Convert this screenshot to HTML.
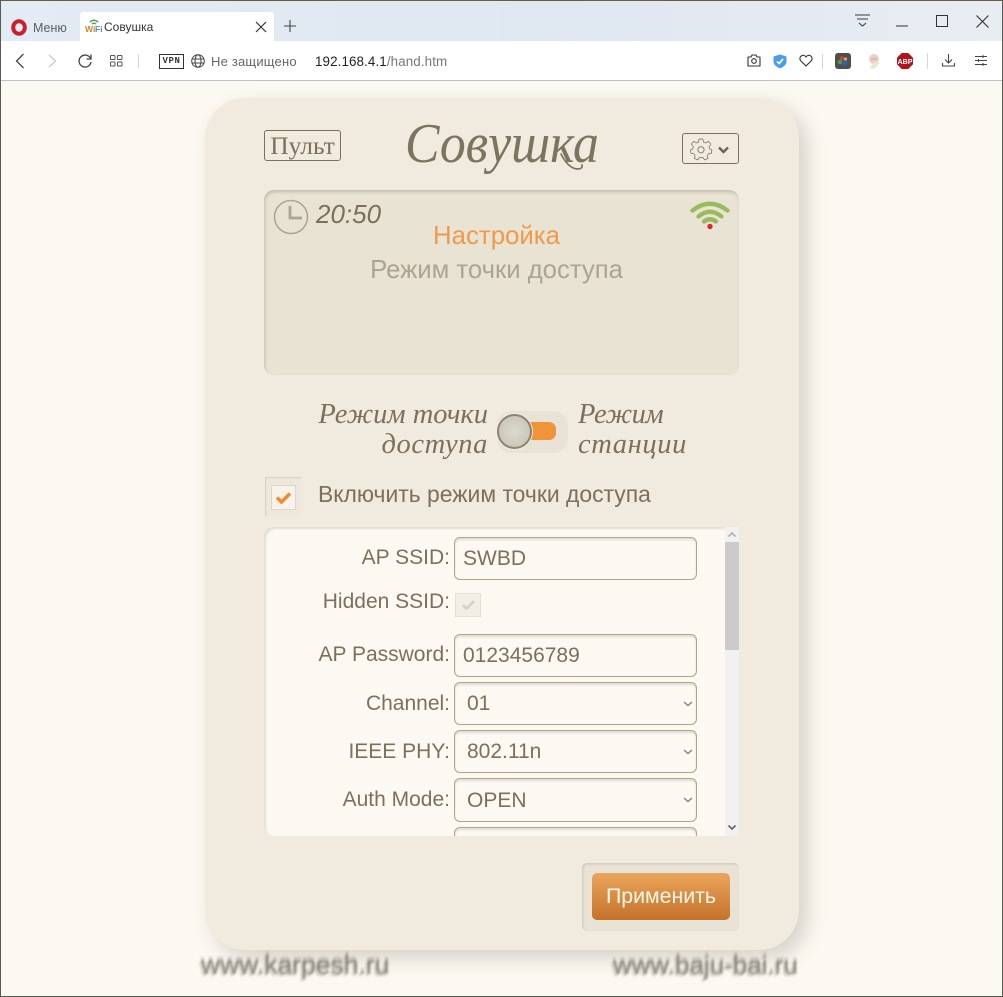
<!DOCTYPE html>
<html lang="ru"><head><meta charset="utf-8"><title>Совушка</title>
<style>
html,body{margin:0;padding:0;width:1003px;height:997px;overflow:hidden;background:#fcf9f2;font-family:"Liberation Sans","Noto Sans CJK SC",sans-serif}
.a{position:absolute;white-space:nowrap}
svg{position:absolute;overflow:visible}
.s{font-family:"Liberation Serif","Noto Serif CJK SC",serif;font-style:italic;color:#7d6f5b}
.lb{right:553px;font-size:21px;color:#7d6f5b;line-height:24px}
.f{left:454px;width:241px;height:41px;border:1px solid #b0a48e;border-radius:6px;background:#fcf9f3;box-shadow:inset 0 2px 2px rgba(120,105,80,.2);font-size:21px;color:#7d6f5b;line-height:41px;box-sizing:content-box}
.f span{position:absolute;left:8px;top:0}
.sel span{left:12px}
.sel svg{left:228px;top:18px}
.smear{font-size:26px;line-height:26px;color:rgba(120,115,105,.75);filter:blur(1px);text-shadow:0 -3px 1px rgba(150,145,135,.5),-2px 2px 1px rgba(170,165,155,.5)}
</style></head><body>
<div class="a" style="left:0;top:0;width:1003px;height:997px;background:#fcf9f2"></div>
<!-- browser chrome -->
<div class="a" style="left:0;top:0;width:1003px;height:42px;background:linear-gradient(90deg,#e3ebf5 0,#dfe7f1 55%,#e8edf2 100%)"></div>
<div class="a" style="left:0;top:41px;width:1003px;height:40px;background:#fff;border-bottom:1px solid #bfc1c6;box-sizing:border-box"></div>
<div class="a" style="left:80px;top:12px;width:194px;height:30px;background:#fff;border-radius:3px 3px 0 0"></div>
<svg style="left:11px;top:19px" width="16" height="17" viewBox="0 0 16 17"><ellipse cx="8" cy="8.500" rx="5.800" ry="6.300" fill="none" stroke="#c8202f" stroke-width="4"/></svg>
<div class="a" style="left:33px;top:20px;font-size:12.500px;color:#5f6062;line-height:16px">Меню</div>
<svg style="left:85px;top:18px" width="17" height="16" viewBox="0 0 17 16"><path d="M5 4Q9 .5 13 4M7 6Q9 4.500 11 6" fill="none" stroke="#5aa048" stroke-width="1.500"/><text x="0" y="14" font-family="Liberation Sans" font-size="8.500" font-weight="700" fill="#d9822b">Wi</text><text x="10" y="14" font-family="Liberation Sans" font-size="8.500" font-weight="700" fill="#5b8fc2">Fi</text></svg>
<div class="a" style="left:104px;top:19px;font-size:12px;color:#333;line-height:16px">Совушка</div>
<svg style="left:255px;top:21px" width="12" height="12" viewBox="0 0 12 12"><path d="M1 1L11 11M11 1L1 11" stroke="#333" stroke-width="1.200"/></svg>
<svg style="left:284px;top:20px" width="12" height="12" viewBox="0 0 12 12"><path d="M6 0V12M0 6H12" stroke="#444" stroke-width="1.100"/></svg>
<svg style="left:855px;top:14px" width="16" height="14" viewBox="0 0 16 14"><path d="M0 1H15M2 5H13M4 9L7.500 12L11 9" fill="none" stroke="#3c3c3c" stroke-width="1.100"/></svg>
<svg style="left:896px;top:25px" width="12" height="2"><path d="M0 1H12" stroke="#333" stroke-width="1"/></svg>
<svg style="left:936px;top:15px" width="12" height="12"><rect x=".5" y=".5" width="11" height="11" fill="none" stroke="#333"/></svg>
<svg style="left:976px;top:15px" width="13" height="13"><path d="M.5.5L12.500 12.500M12.500.5L.5 12.500" stroke="#333" stroke-width="1.100"/></svg>
<svg style="left:15px;top:53px" width="10" height="16"><path d="M8.500 1L1.500 8L8.500 15" fill="none" stroke="#444" stroke-width="1.300"/></svg>
<svg style="left:48px;top:54px" width="9" height="14"><path d="M1 1L7.500 7L1 13" fill="none" stroke="#c8c8c8" stroke-width="1.200"/></svg>
<svg style="left:78px;top:54px" width="14" height="14" viewBox="0 0 14 14"><path d="M12.500 4.500A6 6 0 1 0 13 8" fill="none" stroke="#444" stroke-width="1.300"/><path d="M13 .5V5H8.500" fill="none" stroke="#444" stroke-width="1.300"/></svg>
<svg style="left:110px;top:55px" width="13" height="12"><g fill="none" stroke="#555" stroke-width="1"><rect x=".5" y=".5" width="4.500" height="4" rx=".8"/><rect x="7.500" y=".5" width="4.500" height="4" rx=".8"/><rect x=".5" y="7" width="4.500" height="4" rx=".8"/><rect x="7.500" y="7" width="4.500" height="4" rx=".8"/></g></svg>
<div class="a" style="left:138px;top:54px;width:1px;height:14px;background:#d5d5d5"></div>
<div class="a" style="left:159px;top:54px;width:23px;height:13px;border:1px solid #333;font-size:9px;line-height:13px;text-align:center;color:#333;letter-spacing:.6px;font-weight:700;font-family:'Liberation Mono',monospace">VPN</div>
<svg style="left:191px;top:54px" width="14" height="14" viewBox="0 0 14 14"><g fill="none" stroke="#444" stroke-width="1"><circle cx="7" cy="7" r="6.300"/><ellipse cx="7" cy="7" rx="3" ry="6.300"/><path d="M1 5H13M1 9H13"/></g></svg>
<div class="a" style="left:211px;top:54px;font-size:13px;color:#666;line-height:16px;letter-spacing:.2px">Не защищено</div>
<div class="a" style="left:315px;top:54px;font-size:13.400px;line-height:16px;color:#222;letter-spacing:.1px">192.168.4.1<span style="color:#777">/hand.htm</span></div>
<svg style="left:747px;top:54px" width="14" height="13" viewBox="0 0 14 13"><path d="M1 3H4L5 1H9L10 3H13V12H1Z" fill="none" stroke="#333" stroke-width="1.100" stroke-linejoin="round"/><circle cx="7" cy="7" r="2.300" fill="none" stroke="#333" stroke-width="1.100"/></svg>
<svg style="left:773px;top:54px" width="14" height="15" viewBox="0 0 14 15"><path d="M7 0.500L13.500 2.500V8Q13 12 7 14.500Q1 12 .5 8V2.500Z" fill="#4a9cf0"/><path d="M4 7.500L6.200 9.500L10 5" fill="none" stroke="#fff" stroke-width="1.800"/></svg>
<svg style="left:799px;top:54px" width="14" height="13" viewBox="0 0 14 13"><path d="M7 12L1.500 6.500C-1 3 4.500-1 7 3C9.500-1 15 3 12.500 6.500Z" fill="none" stroke="#333" stroke-width="1.100"/></svg>
<div class="a" style="left:822px;top:54px;width:1px;height:15px;background:#d5d5d5"></div>
<div class="a" style="left:835px;top:53px;width:16px;height:16px;background:#4f4f4f;border-radius:3px"></div>
<svg style="left:837px;top:55px" width="12" height="12"><circle cx="5" cy="3.500" r="2.300" fill="#c9403a"/><circle cx="3" cy="7" r="2.300" fill="#4d9b4a"/><circle cx="8" cy="8" r="2.400" fill="#2d5fc0"/><circle cx="8.500" cy="4" r="1.600" fill="#d8b33a"/></svg>
<svg style="left:866px;top:53px" width="17" height="17" viewBox="0 0 17 17"><circle cx="8" cy="6" r="5" fill="#eccfc6"/><path d="M3 15L9 9L14 10L8 16Z" fill="#ece6ce"/><path d="M5 6H11" stroke="#cfa79c"/></svg>
<svg style="left:897px;top:53px" width="16" height="16"><path d="M4.700 0H11.300L16 4.700V11.300L11.300 16H4.700L0 11.300V4.700Z" fill="#b5121c"/><text x="8" y="11" text-anchor="middle" font-family="Liberation Sans" font-size="7" font-weight="700" fill="#fff">ABP</text></svg>
<div class="a" style="left:927px;top:53px;width:1px;height:16px;background:#d5d5d5"></div>
<svg style="left:942px;top:54px" width="13" height="13" viewBox="0 0 13 13"><path d="M6.500 0V8.500M3 5.500L6.500 9L10 5.500M.5 9V12H12.500V9" fill="none" stroke="#444" stroke-width="1.100"/></svg>
<svg style="left:975px;top:55px" width="12" height="11" viewBox="0 0 12 11"><path d="M0 1.500H12M0 5.500H12M0 9.500H12M8 0V3M3.500 4V7M8 8V11" fill="none" stroke="#444" stroke-width="1"/></svg>

<!-- blurred footer texts -->
<div class="a smear" style="left:201px;top:952px;font-size:26.500px">www.karpesh.ru</div>
<div class="a smear" style="left:613px;top:952px;font-size:26px">www.baju-bai.ru</div>

<!-- card -->
<div class="a" style="left:205px;top:98px;width:594px;height:852px;border-radius:40px;background:#f1ebdf;box-shadow:8px 8px 20px rgba(90,85,70,.24)"></div>
<div class="a" style="left:264px;top:130px;width:75px;height:29px;border:1px solid #7d6f5b;border-radius:3px;font-family:'Liberation Serif',serif;font-size:25.500px;line-height:29px;color:#7d6f5b;text-align:center">Пульт</div>
<div class="a s" style="left:405px;top:111px;font-size:56.500px;line-height:66px;color:#7c745f;transform:scaleX(.915);transform-origin:0 0">Совушка</div>
<svg style="left:555px;top:150px" width="30" height="24" viewBox="0 0 30 24"><path d="M6 4Q13 18 22 19Q28 19 27 15" fill="none" stroke="#7c745f" stroke-width="1.700" stroke-linecap="round"/></svg>
<div class="a" style="left:682px;top:133px;width:55px;height:29px;border:1px solid #7d6f5b;border-radius:3px"></div>
<svg style="left:690px;top:138px" width="23" height="23" viewBox="0 0 23 23"><path d="M9.500 1H13.500L14.200 4.200L16.700 5.300L19.500 3.500L22 6.500L20 9L20.800 11.500L23 12.500L22.500 16L19.500 16.500L18 19L19 21.500L15.500 23L13.500 20.500H10L8 23L4.500 21.500L5.500 19L4 16.500L1 16L.5 12.500L3 11.500L3.500 9L1.500 6.500L4 3.500L6.800 5.300L9 4.200Z" transform="scale(.95)" fill="none" stroke="#7d6f5b" stroke-width=".8" stroke-linejoin="round"/><circle cx="11" cy="11.800" r="3.100" fill="none" stroke="#7d6f5b" stroke-width=".9"/></svg>
<svg style="left:718px;top:146px" width="11" height="8"><path d="M1 1.500L5.500 6L10 1.500" fill="none" stroke="#6d6250" stroke-width="2.400"/></svg>

<!-- display -->
<div class="a" style="left:264px;top:190px;width:475px;height:185px;border-radius:10px;background:#e9e3d4;box-shadow:inset 1px 2px 3px rgba(110,100,80,.3)"></div>
<svg style="left:273px;top:199px" width="36" height="36" viewBox="0 0 36 36"><circle cx="18" cy="18" r="16.500" fill="none" stroke="#aca493" stroke-width="1.500"/><path d="M17 7V19H29" fill="none" stroke="#aca493" stroke-width="2.800"/></svg>
<div class="a" style="left:316px;top:198px;font-size:26px;font-style:italic;line-height:32px;color:#7d6f5b">20:50</div>
<div class="a" style="left:264px;width:465px;top:220px;text-align:center;font-size:25.800px;line-height:32px;color:#ef9a4b">Настройка</div>
<div class="a" style="left:264px;width:465px;top:254px;text-align:center;font-size:25.700px;line-height:32px;color:#aca493">Режим точки доступа</div>
<svg style="left:690px;top:200px" width="40" height="30" viewBox="0 0 40 30"><path d="M2.500 10.500Q20-3 37.500 10.500M8.500 16.500Q20 7 31.500 16.500M14 21.500Q20 17 26 21.500" fill="none" stroke="#98bb5c" stroke-width="4.300" stroke-linecap="round"/><circle cx="20" cy="26.500" r="2.700" fill="#e2232e"/></svg>

<!-- toggle -->
<div class="a s" style="right:515px;top:400px;font-size:28.500px;line-height:30px;text-align:right">Режим точки<br><span style="letter-spacing:.6px">доступа</span></div>
<div class="a s" style="left:578px;top:400px;font-size:28.500px;line-height:30px"><span style="letter-spacing:-.4px">Режим</span><br><span style="letter-spacing:.6px">станции</span></div>
<div class="a" style="left:497px;top:411px;width:71px;height:42px;border-radius:14px;background:#e9e3d6"></div>
<div class="a" style="left:520px;top:422px;width:36px;height:18px;border-radius:7px;background:#f0943a"></div>
<div class="a" style="left:497px;top:414px;width:35px;height:35px;border-radius:50%;box-sizing:border-box;border:2px solid #8c8371;background:radial-gradient(circle at 50% 50%,#dcd9ce,#c4c0b3);box-shadow:0 0 0 1px #f3eee2"></div>

<!-- checkbox -->
<div class="a" style="left:265px;top:477px;width:36px;height:39px;background:#eee8dc;box-shadow:inset 1px 1px 1px rgba(120,105,80,.2)"></div>
<div class="a" style="left:271px;top:485px;width:25px;height:25px;background:#f7f3ea;border:1px solid #ddd7c9;box-sizing:border-box"></div>
<svg style="left:275px;top:491px" width="17" height="13"><path d="M2 6.500L6.500 11L15 2.500" fill="none" stroke="#ee8a33" stroke-width="3.500"/></svg>
<div class="a" style="left:318px;top:480px;font-size:22.900px;line-height:28px;color:#7d6f5b">Включить режим точки доступа</div>

<!-- scroll panel -->
<div class="a" style="left:264px;top:527px;width:475px;height:309px;background:#fcf9f3;border-radius:10px 0 0 10px;box-shadow:inset 2px 2px 2px rgba(130,115,90,.2);overflow:hidden"></div>
<div class="a" style="left:725px;top:527px;width:14px;height:309px;background:#f1f1f1"></div>
<div class="a" style="left:725px;top:542px;width:14px;height:108px;background:#cbcbcb"></div>
<svg style="left:727px;top:531px" width="10" height="7"><path d="M1.500 5.500L5 2L8.500 5.500" fill="none" stroke="#b0b0b0" stroke-width="1.600"/></svg>
<svg style="left:727px;top:824px" width="10" height="7"><path d="M1.500 1.500L5 5L8.500 1.500" fill="none" stroke="#606060" stroke-width="1.600"/></svg>

<div class="a lb" style="top:546px">AP SSID:</div>
<div class="a f" style="top:537px"><span>SWBD</span></div>
<div class="a lb" style="top:590px">Hidden SSID:</div>
<div class="a" style="left:455px;top:593px;width:26px;height:24px;box-sizing:border-box;background:#f1eee6;border:1px solid #e4e0d6"></div>
<svg style="left:461px;top:599px" width="15" height="12"><path d="M2 6L5.500 9.500L13 2" fill="none" stroke="#d5d2c9" stroke-width="2.600"/></svg>
<div class="a lb" style="top:643px">AP Password:</div>
<div class="a f" style="top:634px"><span>0123456789</span></div>
<div class="a lb" style="top:692px">Channel:</div>
<div class="a f sel" style="top:682px"><span>01</span><svg width="10" height="6"><path d="M1 1L5 4.500L9 1" fill="none" stroke="#8a8070" stroke-width="1.400"/></svg></div>
<div class="a lb" style="top:740px">IEEE PHY:</div>
<div class="a f sel" style="top:730px"><span>802.11n</span><svg width="10" height="6"><path d="M1 1L5 4.500L9 1" fill="none" stroke="#8a8070" stroke-width="1.400"/></svg></div>
<div class="a lb" style="top:788px">Auth Mode:</div>
<div class="a f sel" style="top:778px;height:42px"><span style="top:1px">OPEN</span><svg width="10" height="6"><path d="M1 1L5 4.500L9 1" fill="none" stroke="#8a8070" stroke-width="1.400"/></svg></div>
<div class="a" style="left:454px;top:827px;width:243px;height:9px;overflow:hidden"><div style="box-sizing:border-box;width:243px;height:30px;border:1px solid #b0a48e;border-radius:6px;background:#fcf9f3;box-shadow:inset 0 2px 2px rgba(120,105,80,.2)"></div></div>

<!-- apply button -->
<div class="a" style="left:582px;top:863px;width:157px;height:68px;border-radius:5px;background:#e9e3d5;box-shadow:inset 1px 1px 2px rgba(120,105,80,.25)"></div>
<div class="a" style="left:592px;top:873px;width:138px;height:47px;border-radius:5px;background:linear-gradient(#eba55c,#c4722a);color:#fff9ec;font-size:21.300px;line-height:46px;text-align:center">Применить</div>

<!-- window frame -->
<div class="a" style="left:0;top:0;width:1003px;height:1px;background:#6c5c3c"></div>
<div class="a" style="left:0;top:0;width:1px;height:997px;background:#5a5a55"></div>
<div class="a" style="left:1002px;top:0;width:1px;height:997px;background:#5a5a55"></div>
<div class="a" style="left:0;top:996px;width:1003px;height:1px;background:#55554f"></div>
</body></html>
